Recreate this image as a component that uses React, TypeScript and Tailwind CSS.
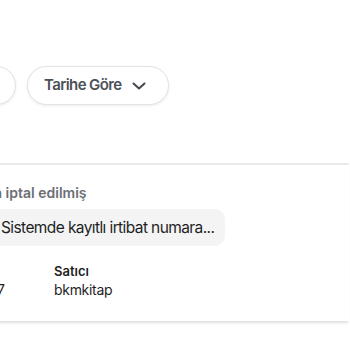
import React from "react";

export default function App() {
  return (
    <div
      className="w-[350px] h-[350px] bg-white overflow-hidden"
      style={{ fontFamily: "Inter, 'Noto Sans', sans-serif" }}
    >
      <div className="flex gap-[11px] pt-[66px] -ml-[60px]">
        <div className="h-[39px] w-[76px] shrink-0 rounded-full border border-[#e2e2e2] bg-white shadow-[0_1px_3px_rgba(0,0,0,0.08)]" />
        <div className="h-[39px] w-[142px] shrink-0 rounded-full border border-[#e2e2e2] bg-white shadow-[0_1px_3px_rgba(0,0,0,0.08)] flex items-center pl-[16px] gap-[10px]">
          <span className="text-[15px] font-semibold text-[#4b5058] tracking-[-0.6px] whitespace-nowrap">Tarihe Göre</span>
          <svg width="14" height="14" viewBox="0 0 14 14" fill="none" stroke="#44474d" strokeWidth="2" strokeLinecap="round" strokeLinejoin="round">
            <path d="M1.5 4.5 L7 9.5 L12.5 4.5" />
          </svg>
        </div>
      </div>

      <div className="mt-[58px] -ml-[40px] w-[389px] border-t-2 border-[#e9e9e9] bg-white shadow-[0_3px_2px_-1px_rgba(0,0,0,0.12)] h-[158px] pt-[18px]">
        <div className="text-[14px] font-semibold text-[#6b6f76] leading-[20px] pl-[34px] whitespace-nowrap">
          a iptal edilmiş
        </div>
        <div className="mt-[6px] ml-[20px] w-[245px] h-[37px] rounded-[10px] bg-[#f4f4f5] flex items-center pl-[21px]">
          <span className="text-[15.5px] text-[#1f1f1f] tracking-[-0.6px] whitespace-nowrap">Sistemde kayıtlı irtibat numara...</span>
        </div>
        <div className="mt-[16px] flex">
          <div className="w-[94px] shrink-0 flex flex-col">
            <span className="text-[13px] font-semibold text-[#1f1f1f] leading-[18px] invisible">Tarih</span>
            <span className="text-[14px] text-[#1f1f1f] leading-[20px] text-right pr-[49px]">7</span>
          </div>
          <div className="flex flex-col">
            <span className="text-[13px] font-semibold text-[#1f1f1f] leading-[18px]">Satıcı</span>
            <span className="text-[14px] text-[#1f1f1f] leading-[20px] tracking-[-0.3px]">bkmkitap</span>
          </div>
        </div>
      </div>
    </div>
  );
}
